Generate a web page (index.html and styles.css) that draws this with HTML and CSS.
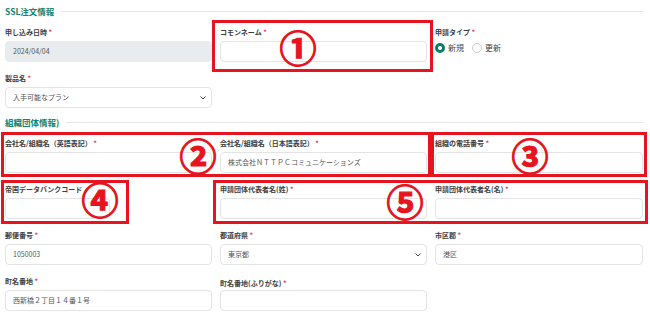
FILE: index.html
```html
<!DOCTYPE html>
<html lang="ja">
<head>
<meta charset="utf-8">
<link rel="stylesheet" href="styles.css">
</head>
<body>
<div class="page">
  <div class="section-title first"><span>SSL注文情報</span><i class="rule"></i></div>
  <div class="grid">
    <div class="field">
      <div class="label">申し込み日時 <span class="req">*</span></div>
      <div class="input disabled">2024/04/04</div>
    </div>
    <div class="field">
      <div class="label">コモンネーム <span class="req">*</span></div>
      <div class="input"></div>
    </div>
    <div class="field">
      <div class="label">申請タイプ <span class="req">*</span></div>
      <div class="radios">
        <span class="radio checked"></span><span class="radio-text">新規</span>
        <span class="radio"></span><span class="radio-text">更新</span>
      </div>
    </div>
    <div class="field">
      <div class="label">製品名 <span class="req">*</span></div>
      <div class="input select">入手可能なプラン<svg class="chev" width="6" height="4" viewBox="0 0 6 4"><path d="M0.5 0.5 L3 3 L5.5 0.5" fill="none" stroke="#444" stroke-width="1"/></svg></div>
    </div>
  </div>

  <div class="section-title second"><span>組織団体情報)</span><i class="rule"></i></div>
  <div class="grid">
    <div class="field">
      <div class="label">会社名/組織名（英語表記） <span class="req">*</span></div>
      <div class="input"></div>
    </div>
    <div class="field">
      <div class="label">会社名/組織名（日本語表記） <span class="req">*</span></div>
      <div class="input">株式会社ＮＴＴＰＣコミュニケーションズ</div>
    </div>
    <div class="field">
      <div class="label">組織の電話番号 <span class="req">*</span></div>
      <div class="input"></div>
    </div>

    <div class="field">
      <div class="label">帝国データバンクコード</div>
      <div class="input short"></div>
    </div>
    <div class="field">
      <div class="label">申請団体代表者名(姓) <span class="req">*</span></div>
      <div class="input"></div>
    </div>
    <div class="field">
      <div class="label">申請団体代表者名(名) <span class="req">*</span></div>
      <div class="input"></div>
    </div>

    <div class="field">
      <div class="label">郵便番号 <span class="req">*</span></div>
      <div class="input">1050003</div>
    </div>
    <div class="field">
      <div class="label">都道府県 <span class="req">*</span></div>
      <div class="input select">東京都<svg class="chev" width="6" height="4" viewBox="0 0 6 4"><path d="M0.5 0.5 L3 3 L5.5 0.5" fill="none" stroke="#444" stroke-width="1"/></svg></div>
    </div>
    <div class="field">
      <div class="label">市区郡 <span class="req">*</span></div>
      <div class="input">港区</div>
    </div>

    <div class="field">
      <div class="label">町名番地 <span class="req">*</span></div>
      <div class="input">西新橋２丁目１４番１号</div>
    </div>
    <div class="field">
      <div class="label low">町名番地(ふりがな) <span class="req">*</span></div>
      <div class="input"></div>
    </div>
  </div>

  <div class="annot box b1"></div>
  <div class="annot box b2"></div>
  <div class="annot box b3"></div>
  <div class="annot box b4"></div>
  <div class="annot box b5"></div>
  <span class="annot num n1">①</span>
  <span class="annot num n2">②</span>
  <span class="annot num n3">③</span>
  <span class="annot num n4">④</span>
  <span class="annot num n5">⑤</span>
</div>
</body>
</html>
```

FILE: styles.css
```css
html, body {
  margin: 0;
  padding: 0;
  background: #ffffff;
}
body {
  font-family: "Noto Sans CJK JP", "Noto Sans", sans-serif;
  color: #333;
}
.page {
  position: relative;
  width: 650px;
  height: 317px;
  padding: 0 0 0 5px;
  box-sizing: border-box;
  overflow: hidden;
}
.section-title {
  display: flex;
  align-items: center;
  height: 12px;
  margin-right: 7px;
  font-size: 8.5px;
  font-weight: 700;
  color: #14836f;
  line-height: 12px;
}
.section-title .rule {
  flex: 1;
  height: 1px;
  background: #e6e6e6;
  margin-left: 7px;
}
.section-title.first {
  margin-top: 5px;
  margin-bottom: 10px;
}
.section-title.second {
  margin-top: 8px;
  margin-bottom: 10px;
}
.grid {
  display: grid;
  grid-template-columns: 207px 207px 208px;
  column-gap: 8px;
  row-gap: 11px;
}
.field {
  display: flex;
  flex-direction: column;
}
.label {
  height: 11px;
  line-height: 11px;
  font-size: 7px;
  font-weight: 700;
  color: #3d3d3d;
  margin-bottom: 3px;
  white-space: nowrap;
}
.label.low {
  position: relative;
  top: 2px;
}
.req {
  color: #e0445f;
}
.input {
  height: 21px;
  box-sizing: border-box;
  border: 1px solid #e3e3e3;
  border-radius: 4px;
  background: #fff;
  font-size: 7px;
  color: #555;
  line-height: 19px;
  padding: 0 7px;
  display: flex;
  align-items: center;
  white-space: nowrap;
}
.input.disabled {
  background: #e9ecef;
  border-color: #e9ecef;
}
.input.short {
  width: 105px;
}
.input.select {
  justify-content: space-between;
  padding-right: 5px;
}
.chev {
  display: block;
}
.radios {
  display: flex;
  align-items: center;
  height: 13px;
  margin-top: 0;
  font-size: 8px;
  color: #444;
}
.radio {
  width: 10px;
  height: 10px;
  box-sizing: border-box;
  border-radius: 50%;
  border: 1px solid #cfcfcf;
  background: #fff;
  margin-right: 3px;
}
.radio.checked {
  border: 3px solid #0f7d68;
}
.radio-text {
  margin-right: 8px;
}
.annot {
  position: absolute;
}
.box {
  border: 3px solid #e5141e;
  box-sizing: border-box;
}
.b1 { left: 212px; top: 20px; width: 221px; height: 52px; }
.b2 { left: 1px; top: 132px; width: 430px; height: 45px; }
.b3 { left: 431px; top: 132px; width: 216px; height: 45px; }
.b4 { left: 1px; top: 180px; width: 128px; height: 44px; }
.b5 { left: 213px; top: 180px; width: 435px; height: 44px; }
.num {
  width: 44px;
  height: 44px;
  display: flex;
  align-items: center;
  justify-content: center;
  font-size: 37px;
  line-height: 1;
  font-weight: 700;
  color: #e5141e;
  -webkit-text-stroke: 1.2px #e5141e;
}
.n1 { left: 276px; top: 25px; }
.n2 { left: 176px; top: 133px; }
.n3 { left: 508px; top: 133px; }
.n4 { left: 78px; top: 177px; }
.n5 { left: 383px; top: 179px; }
```
